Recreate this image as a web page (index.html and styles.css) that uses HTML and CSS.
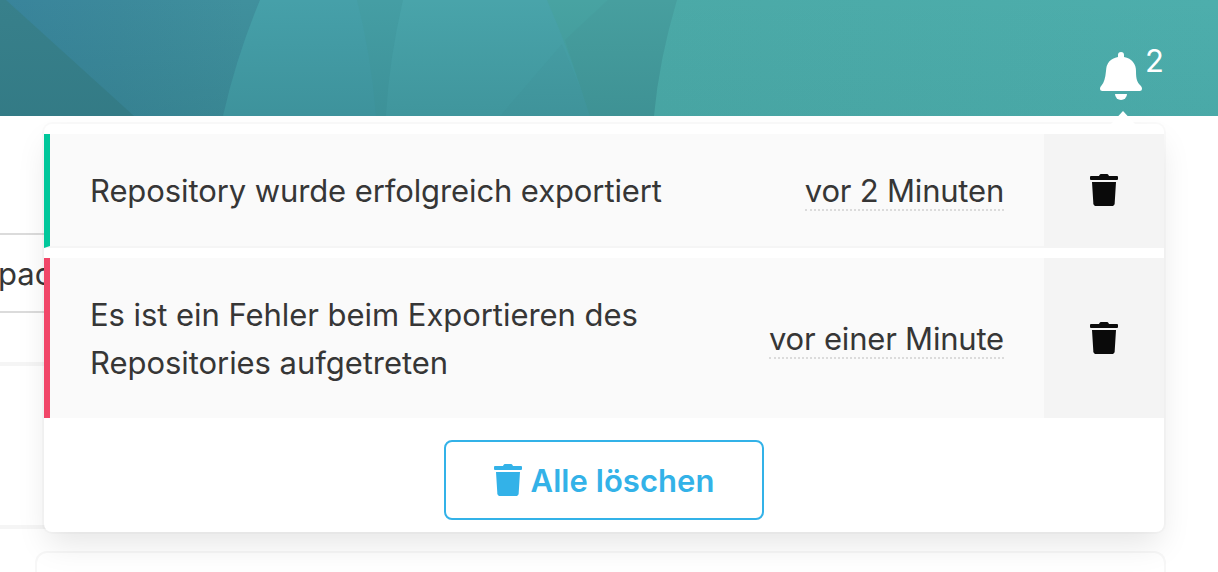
FILE: index.html
```html
<!DOCTYPE html>
<html lang="de">
<head>
<meta charset="utf-8">
<title>Benachrichtigungen</title>
<link rel="stylesheet" href="styles.css">
</head>
<body>
<svg class="symbols" aria-hidden="true">
  <symbol id="trash" viewBox="0 0 28 32">
    <path d="M1 2h8l.7-1.3Q10.1 0 10.900 0h6.200q.8 0 1.200.7L19 2h8q1 0 1 1v2q0 1-1 1H1Q0 6 0 5V3q0-1 1-1z"/>
    <path d="M2 8h24l-1.300 21.200Q24.500 32 21.700 32H6.300Q3.500 32 3.300 29.200z"/>
  </symbol>
</svg>
<header class="hero">
  <svg class="facets" viewBox="0 0 1218 116" preserveAspectRatio="none">
    <defs>
      <linearGradient id="base" x1="0" x2="1" y1="0" y2="0">
        <stop offset="0" stop-color="#39849b"/><stop offset=".1" stop-color="#3c899b"/><stop offset=".2" stop-color="#40909d"/>
      </linearGradient>
      <linearGradient id="shade" x1="0" x2="0" y1="0" y2="1">
        <stop offset="0" stop-color="#266c76" stop-opacity="0"/><stop offset="1" stop-color="#266c76" stop-opacity=".26"/>
      </linearGradient>
      <linearGradient id="right" x1="0" x2="1" y1="0" y2="0">
        <stop offset="0" stop-color="#4ba9a7"/><stop offset="1" stop-color="#4daeac"/>
      </linearGradient>
      <linearGradient id="rightshade" x1="0" x2="0" y1="0" y2="1">
        <stop offset="0" stop-color="#145a60" stop-opacity="0"/><stop offset="1" stop-color="#145a60" stop-opacity=".06"/>
      </linearGradient>
    </defs>
    <rect width="1218" height="116" fill="url(#base)"/>
    <path d="M0 0H6L134 116H0z" fill="#38808b"/>
    <path d="M260 0H410L394 116H223Q236 58 260 0z" fill="#46a0a9"/>
    <path d="M357 0H410L394 116H376Q371 55 357 0z" fill="#459ea4"/>
    <path d="M403 0H560L600 116H386Q389 60 403 0z" fill="#49a4aa"/>
    <path d="M562 44L592 116H500z" fill="#48a1a7"/>
    <path d="M547 0H690L668 116H590Q571 55 547 0z" fill="#48a3a2"/>
    <path d="M608 0H690L668 116H590L565 40z" fill="#479f9f"/>
    <path d="M677 0H1218V116H654Q659 60 677 0z" fill="url(#right)"/>
    <path d="M0 0H677Q659 60 654 116H0z" fill="url(#shade)"/>
    <path d="M677 0H1218V116H654Q659 60 677 0z" fill="url(#rightshade)"/>
  </svg>
  <div class="notifier">
    <svg class="bell" viewBox="0 0 42 48" fill="#fff">
      <path d="M18 5V3a3 3 0 0 1 6 0v2c8 1.500 12 7 12 14 0 8 1 11 4.500 14.500Q42 35 42 36.500 42 39 39.500 39h-37Q0 39 0 36.500 0 35 1.500 33.500 5 30 6 19 6.500 7 18 5z"/>
      <path d="M15 42h12a6 6 0 0 1-12 0z"/>
    </svg>
    <span class="count">2</span>
  </div>
</header>
<main class="page">
  <div class="field"><span>pac</span></div>
  <div class="panel"></div>
  <div class="card"></div>
</main>
<section class="dropdown">
  <div class="arrow"></div>
  <div class="list">
    <article class="item success">
      <div class="message"><p class="line one">Repository wurde erfolgreich exportiert</p></div>
      <div class="when"><time>vor 2 Minuten</time></div>
      <button class="remove" aria-label="Löschen"><svg class="icon"><use href="#trash"/></svg></button>
    </article>
    <article class="item danger">
      <div class="message"><p class="line">Es ist ein Fehler beim Exportieren des</p><p class="line">Repositories aufgetreten</p></div>
      <div class="when"><time>vor einer Minute</time></div>
      <button class="remove" aria-label="Löschen"><svg class="icon"><use href="#trash"/></svg></button>
    </article>
  </div>
  <div class="actions">
    <button class="clear"><svg class="icon"><use href="#trash"/></svg><span>Alle löschen</span></button>
  </div>
</section>
</body>
</html>
```
FILE: styles.css
```css
* { box-sizing: border-box; }
body {
  margin: 0;
  width: 1218px;
  height: 572px;
  overflow: hidden;
  position: relative;
  background: #fff;
  color: #363636;
  font: 31px/48px Inter, "Liberation Sans", sans-serif;
}
p { margin: 0; }
button { font: inherit; padding: 0; border: 0; }
.symbols { position: absolute; width: 0; height: 0; }
.hero { height: 116px; display: grid; }
.facets { grid-area: 1 / 1; width: 1218px; height: 116px; display: block; }
.notifier { grid-area: 1 / 1; z-index: 1; display: flex; padding: 37px 0 0 1100px; color: #fff; }
.bell { width: 42px; height: 48px; margin-top: 15px; }
.count { margin-left: 3px; font-size: 31px; }
.page { height: 456px; padding-top: 117px; overflow: hidden; }
.field {
  height: 80px;
  width: 200px;
  border: solid #dbdbdb;
  border-width: 2px 0;
  padding-top: 15px;
  margin-bottom: 49px;
}
.field span { margin-left: -2px; }
.panel { height: 167px; border: solid #f5f5f5; border-width: 4px 0; width: 1100px; }
.card {
  width: 1131px;
  height: 22px;
  margin: 22px 0 0 35px;
  border: 2px solid #f7f7f7;
  border-bottom: 0;
  border-radius: 12px 12px 0 0;
}
.dropdown {
  position: absolute;
  left: 44px;
  top: 124px;
  width: 1120px;
  height: 408px;
  padding-top: 10px;
  background: #fff;
  border-radius: 8px;
  box-shadow: 0 16px 32px -4px rgba(10, 10, 10, .1), 0 0 0 2px rgba(10, 10, 10, .02);
}
.arrow {
  position: absolute;
  left: 1067px;
  top: -13px;
  width: 24px;
  height: 13px;
  background: #fff;
  clip-path: polygon(50% 0, 100% 100%, 0 100%);
}
.list { display: flex; flex-direction: column; gap: 10px; }
.item { display: flex; background: #fafafa; border-left: 6px solid; }
.success { height: 114px; border-left-color: #00c79b; border-bottom: 2px solid #f5f5f5; }
.danger { height: 160px; border-left-color: #f14668; }
.message { flex: 1; padding: 33px 0 0 40px; }
.line { white-space: nowrap; width: max-content; letter-spacing: -.05px; }
.one { letter-spacing: -.1px; }
.when { display: flex; align-items: flex-start; margin-right: 40px; padding-top: 38px; }
.danger .when { padding-top: 62px; }
time {
  height: 39px;
  line-height: 38px;
  border-bottom: 2px dotted #dbdbdb;
  white-space: nowrap;
  letter-spacing: -.2px;
}
.remove { width: 120px; background: #f4f4f4; display: grid; place-items: center; color: #0a0a0a; }
.success .remove { height: 114px; padding-bottom: 2px; }
.icon { width: 28px; height: 32px; fill: currentColor; }
.actions { display: flex; justify-content: center; padding-top: 22px; }
.clear {
  width: 320px;
  height: 80px;
  display: flex;
  align-items: center;
  justify-content: center;
  gap: 9px;
  background: #fff;
  border: 2px solid #33b2e8;
  border-radius: 8px;
  color: #33b2e8;
  font-weight: 600;
  letter-spacing: .05px;
}
.clear span { padding-top: 2px; }
```
